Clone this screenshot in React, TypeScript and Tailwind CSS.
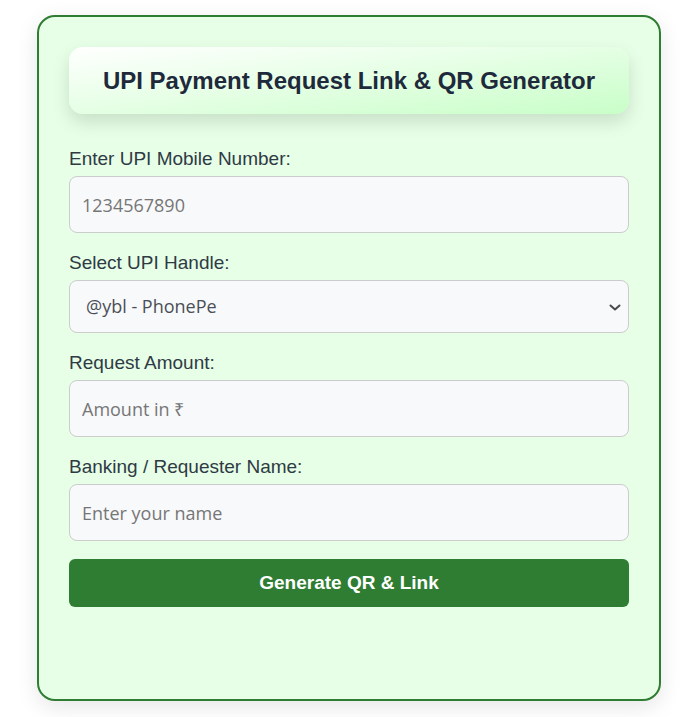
import React from "react";

const labelCls = "block text-[19px] leading-[22px] mb-[6px] text-[#2f3a45]";
const inputCls =
  "w-full h-[57px] px-[12px] rounded-[8px] border border-[#cccccc] bg-[#f8f9fb] text-[18px] text-[#333] placeholder:text-[#767676] outline-none";

export default function App() {
  return (
    <div className="min-h-screen bg-white flex justify-center pt-[15px] font-['Liberation_Sans',Arial,sans-serif]">
      <div className="w-[624px] h-fit rounded-[18px] border-2 border-[#2e7d32] bg-[#e6ffe6] px-[30px] pt-[30px] pb-[92px] shadow-[0_6px_22px_rgba(0,0,0,0.1)]">
        <div className="h-[67px] rounded-[14px] bg-gradient-to-br from-white to-[#c8fec8] flex items-center justify-center shadow-[0_8px_18px_rgba(0,0,0,0.13)]">
          <h1 className="text-[24px] font-bold text-[#1e293b]">UPI Payment Request Link &amp; QR Generator</h1>
        </div>

        <form className="mt-[34px] flex flex-col gap-[19px]" onSubmit={(e) => e.preventDefault()}>
          <div>
            <label className={labelCls}>Enter UPI Mobile Number:</label>
            <input className={inputCls + " font-['Open_Sans',sans-serif]"} placeholder="1234567890" />
          </div>

          <div>
            <label className={labelCls}>Select UPI Handle:</label>
            <div className="relative">
              <select className="w-full h-[53px] pl-[16px] pr-[36px] appearance-none rounded-[8px] border border-[#cccccc] bg-[#f8f9fb] text-[18px] text-[#4a4f57] font-['Open_Sans',sans-serif] outline-none">
                <option>@ybl - PhonePe</option>
                <option>@okaxis - Google Pay</option>
                <option>@paytm - Paytm</option>
              </select>
              <svg className="absolute right-[7px] top-1/2 -translate-y-1/2 pointer-events-none" width="14" height="12" viewBox="0 0 14 12">
                <path d="M2.5 4.5 L7 8.5 L11.5 4.5" fill="none" stroke="#4a4a4a" strokeWidth="2" strokeLinecap="round" strokeLinejoin="round" />
              </svg>
            </div>
          </div>

          <div>
            <label className={labelCls}>Request Amount:</label>
            <input className={inputCls + " font-['Open_Sans',sans-serif]"} placeholder="Amount in ₹" />
          </div>

          <div>
            <label className={labelCls}>Banking / Requester Name:</label>
            <input className={inputCls + " font-['Open_Sans',sans-serif]"} placeholder="Enter your name" />
          </div>

          <button className="-mt-[1px] h-[48px] rounded-[6px] bg-[#2e7d32] text-white text-[19px] font-bold">
            Generate QR &amp; Link
          </button>
        </form>
      </div>
    </div>
  );
}
